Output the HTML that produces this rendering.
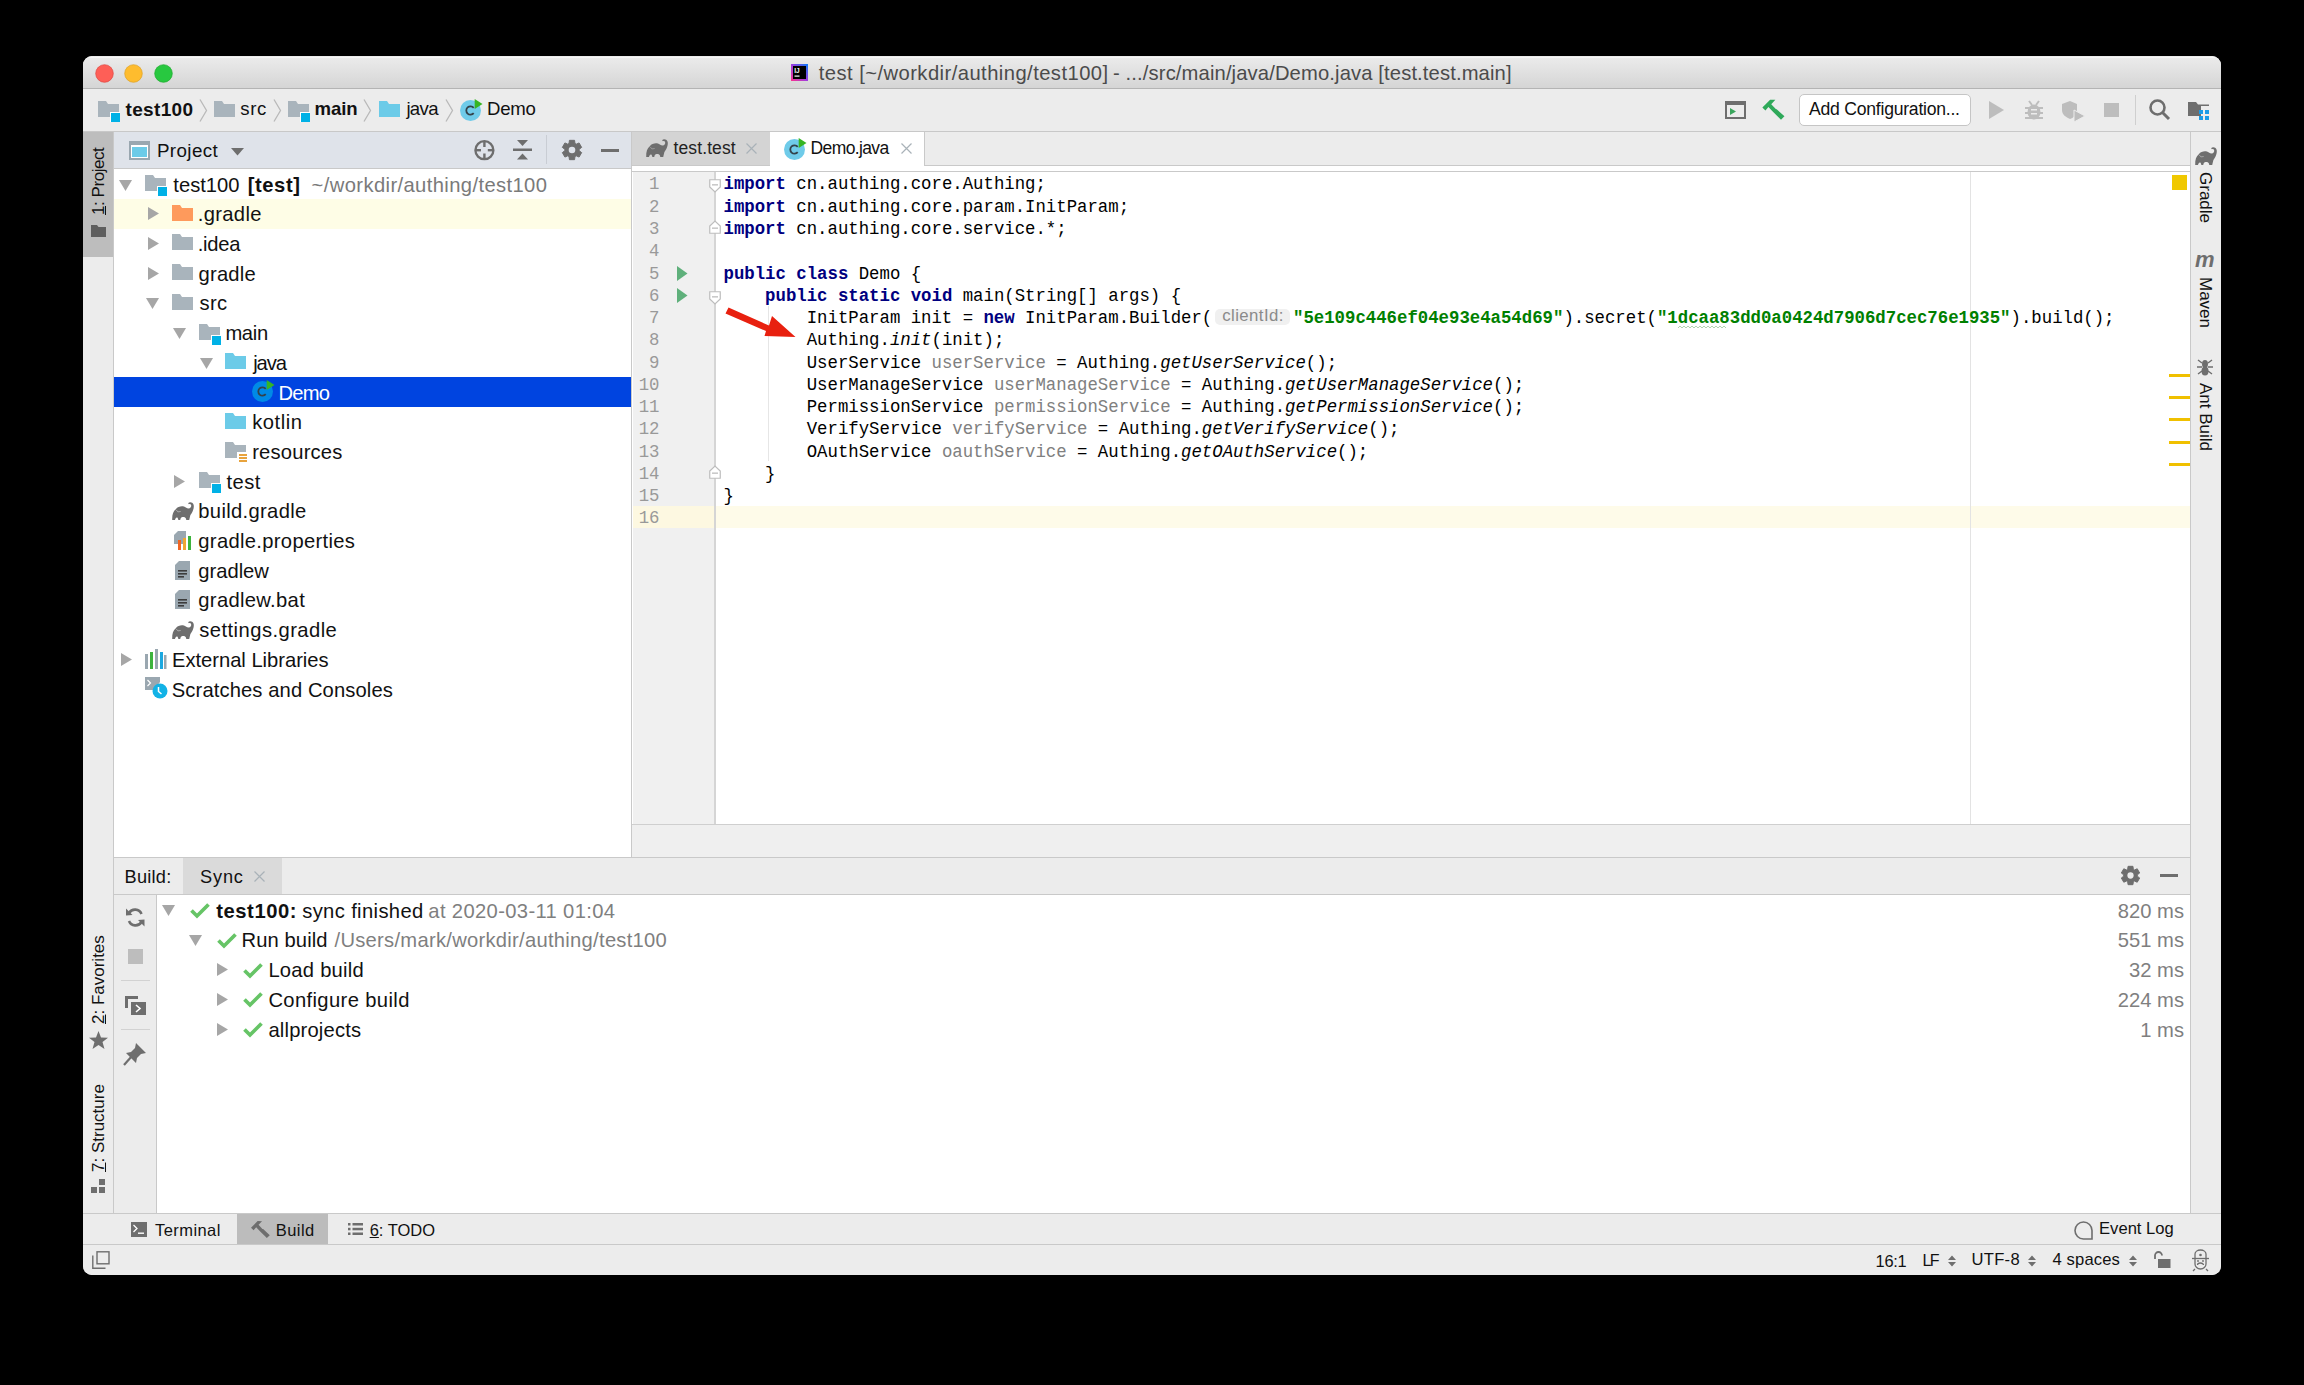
<!DOCTYPE html><html><head><meta charset="utf-8"><style>html,body{margin:0;padding:0;background:#000;width:2304px;height:1385px;overflow:hidden;position:relative}</style></head><body>
<div style="position:absolute;left:83px;top:56px;width:2138px;height:1219px;background:#ececec;border-radius:9px;"></div>
<div style="position:absolute;left:83px;top:56px;width:2138px;height:32px;background:linear-gradient(#ececec,#d5d5d5);border-radius:9px 9px 0 0;"></div>
<div style="position:absolute;left:83px;top:88px;width:2138px;height:1px;background:#b4b4b4;"></div>
<div style="position:absolute;left:89px;top:56.5px;width:2126px;height:1px;background:#f6f6f6;"></div>
<svg style="position:absolute;left:94.5px;top:63.5px;overflow:visible" width="19" height="19" viewBox="0 0 19 19"><circle cx="9.5" cy="9.5" r="8.8" fill="#fe5f57" stroke="#e0443e" stroke-width="0.7"/></svg>
<svg style="position:absolute;left:124.0px;top:63.5px;overflow:visible" width="19" height="19" viewBox="0 0 19 19"><circle cx="9.5" cy="9.5" r="8.8" fill="#febc2e" stroke="#dea123" stroke-width="0.7"/></svg>
<svg style="position:absolute;left:153.5px;top:63.5px;overflow:visible" width="19" height="19" viewBox="0 0 19 19"><circle cx="9.5" cy="9.5" r="8.8" fill="#28c840" stroke="#1aab29" stroke-width="0.7"/></svg>
<svg style="position:absolute;left:791px;top:64px;overflow:visible" width="17" height="17" viewBox="0 0 17 17"><defs><linearGradient id="ijg" x1="0" y1="1" x2="1" y2="0"><stop offset="0" stop-color="#fc318c"/><stop offset="0.5" stop-color="#9c3ee0"/><stop offset="1" stop-color="#087cfa"/></linearGradient></defs><rect width="17" height="17" fill="url(#ijg)"/><rect x="2" y="2" width="13" height="13" fill="#000"/><text x="3.3" y="9" font-family="Liberation Sans" font-weight="bold" font-size="6.5" fill="#fff">IJ</text><rect x="3.5" y="11.5" width="5" height="1.2" fill="#fff"/></svg>
<div style="position:absolute;left:818.80px;top:62.01px;font-family:'Liberation Sans', sans-serif;font-size:20.2px;line-height:1.1172;color:#4b4b4b;font-weight:normal;font-style:normal;white-space:pre;;letter-spacing:0.445px">test [~/workdir/authing/test100]</div>
<div style="position:absolute;left:1113.00px;top:62.01px;font-family:'Liberation Sans', sans-serif;font-size:20.2px;line-height:1.1172;color:#4b4b4b;font-weight:normal;font-style:normal;white-space:pre;;letter-spacing:0.131px">- .../src/main/java/Demo.java [test.test.main]</div>
<div style="position:absolute;left:83px;top:131px;width:2138px;height:1px;background:#c8c8c8;"></div>
<svg style="position:absolute;left:98px;top:101px;overflow:visible" width="24" height="21" viewBox="0 0 24 21"><path d="M0 0 H8 L10 3 H21 V16 H0 Z" fill="#a9b4bc"/><rect x="12" y="11" width="10" height="10" fill="#fff"/><rect x="13" y="12" width="9" height="9" fill="#00b1e6"/></svg>
<div style="position:absolute;left:125.50px;top:98.50px;font-family:'Liberation Sans', sans-serif;font-size:19.0px;line-height:1.1172;color:#111;font-weight:bold;font-style:normal;white-space:pre;;letter-spacing:0.350px">test100</div>
<svg style="position:absolute;left:198.5px;top:99px;overflow:visible" width="9" height="23" viewBox="0 0 9 23"><path d="M1 0.5 L7.5 11.5 L1 22.5" fill="none" stroke="#b9b9b9" stroke-width="1.3"/></svg>
<svg style="position:absolute;left:214px;top:101px;overflow:visible" width="21" height="16" viewBox="0 0 21 16"><path d="M0 0 H8 L10 3 H21 V16 H0 Z" fill="#a9b4bc"/></svg>
<div style="position:absolute;left:240.30px;top:98.86px;font-family:'Liberation Sans', sans-serif;font-size:18.6px;line-height:1.1172;color:#111;font-weight:normal;font-style:normal;white-space:pre;;letter-spacing:0.550px">src</div>
<svg style="position:absolute;left:272.5px;top:99px;overflow:visible" width="9" height="23" viewBox="0 0 9 23"><path d="M1 0.5 L7.5 11.5 L1 22.5" fill="none" stroke="#b9b9b9" stroke-width="1.3"/></svg>
<svg style="position:absolute;left:287.5px;top:101px;overflow:visible" width="24" height="21" viewBox="0 0 24 21"><path d="M0 0 H8 L10 3 H21 V16 H0 Z" fill="#a9b4bc"/><rect x="12" y="11" width="10" height="10" fill="#fff"/><rect x="13" y="12" width="9" height="9" fill="#00b1e6"/></svg>
<div style="position:absolute;left:314.60px;top:98.86px;font-family:'Liberation Sans', sans-serif;font-size:18.6px;line-height:1.1172;color:#111;font-weight:bold;font-style:normal;white-space:pre;;letter-spacing:-0.100px">main</div>
<svg style="position:absolute;left:363px;top:99px;overflow:visible" width="9" height="23" viewBox="0 0 9 23"><path d="M1 0.5 L7.5 11.5 L1 22.5" fill="none" stroke="#b9b9b9" stroke-width="1.3"/></svg>
<svg style="position:absolute;left:378.5px;top:101px;overflow:visible" width="21" height="16" viewBox="0 0 21 16"><path d="M0 0 H8 L10 3 H21 V16 H0 Z" fill="#6ccbe8"/></svg>
<div style="position:absolute;left:406.40px;top:98.86px;font-family:'Liberation Sans', sans-serif;font-size:18.6px;line-height:1.1172;color:#111;font-weight:normal;font-style:normal;white-space:pre;;letter-spacing:-0.667px">java</div>
<svg style="position:absolute;left:445px;top:99px;overflow:visible" width="9" height="23" viewBox="0 0 9 23"><path d="M1 0.5 L7.5 11.5 L1 22.5" fill="none" stroke="#b9b9b9" stroke-width="1.3"/></svg>
<svg style="position:absolute;left:460px;top:97.5px;overflow:visible" width="24" height="23" viewBox="0 0 24 23"><circle cx="10.5" cy="12.5" r="10.5" fill="#6fcbe9"/><path d="M13.72 9.80 A4.2 4.2 0 1 0 13.72 15.20" fill="none" stroke="#34424a" stroke-width="1.8"/><path d="M14.7 1.0 L22.5 6.0 L14.7 11.0 Z" fill="#36b524"/></svg>
<div style="position:absolute;left:487.00px;top:98.86px;font-family:'Liberation Sans', sans-serif;font-size:18.6px;line-height:1.1172;color:#111;font-weight:normal;font-style:normal;white-space:pre;;letter-spacing:-0.233px">Demo</div>
<svg style="position:absolute;left:1725px;top:101px;overflow:visible" width="21" height="18" viewBox="0 0 21 18"><rect x="1" y="1" width="19" height="16" fill="none" stroke="#6e6e6e" stroke-width="2"/><rect x="1" y="1" width="19" height="3" fill="#6e6e6e"/><path d="M5 7 L11 10.5 L5 14 Z" fill="#3aa55c"/></svg>
<svg style="position:absolute;left:1755px;top:94px;overflow:visible" width="35" height="30" viewBox="0 0 35 30"><path d="M7.36 13.43 L15.16 5.63 L20.36 5.85 L16.24 10.18 L20.79 14.94 L21.66 15.16 L29.46 22.3 L26 25.77 L18.19 17.98 L13.43 13 L10.4 16.46 Z" fill="#2fa95a"/></svg>
<div style="position:absolute;left:1798.5px;top:93.5px;width:172px;height:32px;background:#fff;border:1px solid #c5c5c5;border-radius:5px;box-sizing:border-box;"></div>
<div style="position:absolute;left:1809.00px;top:99.97px;font-family:'Liberation Sans', sans-serif;font-size:17.6px;line-height:1.1172;color:#111;font-weight:normal;font-style:normal;white-space:pre;;letter-spacing:-0.237px">Add Configuration...</div>
<svg style="position:absolute;left:1989px;top:101px;overflow:visible" width="15" height="18" viewBox="0 0 15 18"><path d="M0 0 L15 9 L0 18 Z" fill="#bdbdbd"/></svg>
<svg style="position:absolute;left:2025px;top:100px;overflow:visible" width="18" height="20" viewBox="0 0 18 20"><g fill="#bdbdbd"><path d="M4 1 L7 5 M14 1 L11 5" stroke="#bdbdbd" stroke-width="2"/><ellipse cx="9" cy="12" rx="6.5" ry="7.5"/><rect x="0" y="7" width="18" height="2"/><rect x="0" y="12" width="18" height="2"/><rect x="0" y="17" width="18" height="2"/></g><rect x="6" y="9" width="6" height="1.5" fill="#ececec"/><rect x="6" y="13" width="6" height="1.5" fill="#ececec"/></svg>
<svg style="position:absolute;left:2062px;top:101px;overflow:visible" width="23" height="21" viewBox="0 0 23 21"><path d="M0 3 L8 0 L15 3 V9 C15 14 11 17 8 18 C4 16 0 14 0 9 Z" fill="#bdbdbd"/><path d="M12 9 L23 15 L12 21 Z" fill="#bdbdbd" stroke="#ececec" stroke-width="1"/></svg>
<div style="position:absolute;left:2104px;top:102.5px;width:14.5px;height:14.5px;background:#bdbdbd;"></div>
<div style="position:absolute;left:2135px;top:95px;width:1px;height:30px;background:#cfcfcf;"></div>
<svg style="position:absolute;left:2149px;top:99px;overflow:visible" width="22" height="21" viewBox="0 0 22 21"><circle cx="8.5" cy="8.5" r="7" fill="none" stroke="#6e6e6e" stroke-width="2.6"/><path d="M13.5 13.5 L20 20" stroke="#6e6e6e" stroke-width="3"/></svg>
<svg style="position:absolute;left:2188px;top:102px;overflow:visible" width="22" height="19" viewBox="0 0 22 19"><path d="M0 0 H8 L10 2.5 H21 V4 H13 V14 H0 Z" fill="#6e6e6e"/><g fill="#1a9be8"><rect x="11" y="8" width="4" height="4"/><rect x="17" y="8" width="4" height="4"/><rect x="11" y="14" width="4" height="4"/><rect x="17" y="14" width="4" height="4"/></g></svg>
<div style="position:absolute;left:113px;top:132px;width:1px;height:1081px;background:#c9c9c9;"></div>
<div style="position:absolute;left:83px;top:132px;width:30px;height:125px;background:#bdbdbd;"></div>
<div style="position:absolute;left:90px;top:214.5px;transform-origin:0 0;transform:rotate(-90deg);font-family:'Liberation Sans', sans-serif;font-size:17px;line-height:1;color:#111;white-space:pre;letter-spacing:-0.45px"><u>1</u>: Project</div>
<svg style="position:absolute;left:91px;top:225px;overflow:visible" width="15" height="12" viewBox="0 0 15 12"><path d="M0 0 H6 L7.5 2 H15 V12 H0 Z" fill="#5e5e5e"/></svg>
<div style="position:absolute;left:90px;top:1024px;transform-origin:0 0;transform:rotate(-90deg);font-family:'Liberation Sans', sans-serif;font-size:17px;line-height:1;color:#111;white-space:pre;letter-spacing:0px"><u>2</u>: Favorites</div>
<svg style="position:absolute;left:89px;top:1031px;overflow:visible" width="19" height="18" viewBox="0 0 19 18"><path d="M9.5 0 L12 6.5 L19 6.8 L13.5 11 L15.5 18 L9.5 14 L3.5 18 L5.5 11 L0 6.8 L7 6.5 Z" fill="#6e6e6e"/></svg>
<div style="position:absolute;left:90px;top:1171.5px;transform-origin:0 0;transform:rotate(-90deg);font-family:'Liberation Sans', sans-serif;font-size:17px;line-height:1;color:#111;white-space:pre;letter-spacing:0px"><u>7</u>: Structure</div>
<svg style="position:absolute;left:91px;top:1179px;overflow:visible" width="15" height="14" viewBox="0 0 15 14"><g fill="#6e6e6e"><rect x="8" y="0" width="6" height="6"/><rect x="0" y="8" width="6" height="6"/><rect x="8" y="8" width="6" height="6"/></g></svg>
<div style="position:absolute;left:114px;top:132px;width:517px;height:36px;background:#dfe3ea;"></div>
<div style="position:absolute;left:114px;top:168px;width:517px;height:1px;background:#c9c9c9;"></div>
<div style="position:absolute;left:114px;top:169px;width:517px;height:688px;background:#fff;"></div>
<div style="position:absolute;left:631px;top:132px;width:1px;height:725px;background:#c9c9c9;"></div>
<svg style="position:absolute;left:129px;top:141px;overflow:visible" width="21" height="19" viewBox="0 0 21 19"><rect x="0" y="0" width="21" height="19" fill="#9aa7b0"/><rect x="2" y="4" width="17" height="13" fill="#fff"/><rect x="3" y="6" width="15" height="10" fill="#6ccbe8"/></svg>
<div style="position:absolute;left:156.90px;top:139.98px;font-family:'Liberation Sans', sans-serif;font-size:18.8px;line-height:1.1172;color:#111;font-weight:normal;font-style:normal;white-space:pre;;letter-spacing:0.400px">Project</div>
<svg style="position:absolute;left:231px;top:148px;overflow:visible" width="13" height="8" viewBox="0 0 13 8"><path d="M0 0 H13 L6.5 7.5 Z" fill="#6e6e6e"/></svg>
<svg style="position:absolute;left:473.5px;top:140px;overflow:visible" width="21" height="21" viewBox="0 0 21 21"><circle cx="10.4" cy="10.2" r="9" fill="none" stroke="#6e6e6e" stroke-width="2.3"/><g fill="#6e6e6e"><rect x="9.2" y="1.5" width="2.4" height="5.5"/><rect x="9.2" y="13.5" width="2.4" height="5.5"/><rect x="1.5" y="9" width="5.5" height="2.4"/><rect x="13.8" y="9" width="5.5" height="2.4"/></g></svg>
<svg style="position:absolute;left:513px;top:140px;overflow:visible" width="19" height="20" viewBox="0 0 19 20"><g fill="#6e6e6e"><rect x="0" y="8.5" width="19" height="2.5"/><path d="M4 0 H15 L9.5 6 Z"/><path d="M4 19.5 H15 L9.5 13.5 Z"/></g></svg>
<div style="position:absolute;left:546px;top:135px;width:1px;height:29px;background:#c9cdd4;"></div>
<svg style="position:absolute;left:561.5px;top:140px;overflow:visible" width="20" height="20" viewBox="0 0 20 20"><polygon points="7.06,3.43 7.43,0.34 12.57,0.34 12.94,3.43 14.23,4.17 17.08,2.94 19.65,7.39 17.16,9.26 17.16,10.74 19.65,12.61 17.08,17.06 14.23,15.83 12.94,16.57 12.57,19.66 7.43,19.66 7.06,16.57 5.77,15.83 2.92,17.06 0.35,12.61 2.84,10.74 2.84,9.26 0.35,7.39 2.92,2.94 5.77,4.17" fill="#6e6e6e" stroke="#6e6e6e" stroke-width="1" stroke-linejoin="round"/><circle cx="10.0" cy="10.0" r="3.3000000000000003" fill="#dfe3ea"/></svg>
<div style="position:absolute;left:601px;top:148.5px;width:18px;height:3px;background:#6e6e6e;"></div>
<div style="position:absolute;left:114px;top:199.2px;width:517px;height:29.7px;background:#fefde6;"></div>
<div style="position:absolute;left:114px;top:377.4px;width:517px;height:29.7px;background:#0044e0;"></div>
<svg style="position:absolute;left:119px;top:180px;overflow:visible" width="14" height="12" viewBox="0 0 14 12"><path d="M0 0 H13 L6.5 11 Z" fill="#a6a6a6"/></svg>
<svg style="position:absolute;left:145px;top:175px;overflow:visible" width="24" height="21" viewBox="0 0 24 21"><path d="M0 0 H8 L10 3 H21 V16 H0 Z" fill="#a9b4bc"/><rect x="12" y="11" width="10" height="10" fill="#fff"/><rect x="13" y="12" width="9" height="9" fill="#00b1e6"/></svg>
<div style="position:absolute;left:173.30px;top:173.61px;font-family:'Liberation Sans', sans-serif;font-size:20.2px;line-height:1.1172;color:#111;font-weight:normal;font-style:normal;white-space:pre;;letter-spacing:0.000px">test100</div>
<div style="position:absolute;left:247.70px;top:173.61px;font-family:'Liberation Sans', sans-serif;font-size:20.2px;line-height:1.1172;color:#111;font-weight:bold;font-style:normal;white-space:pre;;letter-spacing:0.580px">[test]</div>
<div style="position:absolute;left:311.60px;top:173.61px;font-family:'Liberation Sans', sans-serif;font-size:20.2px;line-height:1.1172;color:#7a7a7a;font-weight:normal;font-style:normal;white-space:pre;;letter-spacing:0.383px">~/workdir/authing/test100</div>
<svg style="position:absolute;left:147.5px;top:207.2px;overflow:visible" width="12" height="14" viewBox="0 0 12 14"><path d="M0 0 V13 L11 6.5 Z" fill="#a6a6a6"/></svg>
<svg style="position:absolute;left:172px;top:205px;overflow:visible" width="21" height="16" viewBox="0 0 21 16"><path d="M0 0 H8 L10 3 H21 V16 H0 Z" fill="#fe9a5c"/></svg>
<div style="position:absolute;left:197.70px;top:203.31px;font-family:'Liberation Sans', sans-serif;font-size:20.2px;line-height:1.1172;color:#111;font-weight:normal;font-style:normal;white-space:pre;;letter-spacing:0.350px">.gradle</div>
<svg style="position:absolute;left:147.5px;top:236.9px;overflow:visible" width="12" height="14" viewBox="0 0 12 14"><path d="M0 0 V13 L11 6.5 Z" fill="#a6a6a6"/></svg>
<svg style="position:absolute;left:172px;top:234.4px;overflow:visible" width="21" height="16" viewBox="0 0 21 16"><path d="M0 0 H8 L10 3 H21 V16 H0 Z" fill="#a9b4bc"/></svg>
<div style="position:absolute;left:197.70px;top:233.01px;font-family:'Liberation Sans', sans-serif;font-size:20.2px;line-height:1.1172;color:#111;font-weight:normal;font-style:normal;white-space:pre;;letter-spacing:-0.225px">.idea</div>
<svg style="position:absolute;left:147.5px;top:266.6px;overflow:visible" width="12" height="14" viewBox="0 0 12 14"><path d="M0 0 V13 L11 6.5 Z" fill="#a6a6a6"/></svg>
<svg style="position:absolute;left:172px;top:264.1px;overflow:visible" width="21" height="16" viewBox="0 0 21 16"><path d="M0 0 H8 L10 3 H21 V16 H0 Z" fill="#a9b4bc"/></svg>
<div style="position:absolute;left:198.50px;top:262.71px;font-family:'Liberation Sans', sans-serif;font-size:20.2px;line-height:1.1172;color:#111;font-weight:normal;font-style:normal;white-space:pre;;letter-spacing:0.220px">gradle</div>
<svg style="position:absolute;left:146px;top:298.3px;overflow:visible" width="14" height="12" viewBox="0 0 14 12"><path d="M0 0 H13 L6.5 11 Z" fill="#a6a6a6"/></svg>
<svg style="position:absolute;left:172px;top:293.8px;overflow:visible" width="21" height="16" viewBox="0 0 21 16"><path d="M0 0 H8 L10 3 H21 V16 H0 Z" fill="#a9b4bc"/></svg>
<div style="position:absolute;left:199.50px;top:292.41px;font-family:'Liberation Sans', sans-serif;font-size:20.2px;line-height:1.1172;color:#111;font-weight:normal;font-style:normal;white-space:pre;;letter-spacing:0.350px">src</div>
<svg style="position:absolute;left:173px;top:328.0px;overflow:visible" width="14" height="12" viewBox="0 0 14 12"><path d="M0 0 H13 L6.5 11 Z" fill="#a6a6a6"/></svg>
<svg style="position:absolute;left:199px;top:323.5px;overflow:visible" width="24" height="21" viewBox="0 0 24 21"><path d="M0 0 H8 L10 3 H21 V16 H0 Z" fill="#a9b4bc"/><rect x="12" y="11" width="10" height="10" fill="#fff"/><rect x="13" y="12" width="9" height="9" fill="#00b1e6"/></svg>
<div style="position:absolute;left:225.40px;top:322.11px;font-family:'Liberation Sans', sans-serif;font-size:20.2px;line-height:1.1172;color:#111;font-weight:normal;font-style:normal;white-space:pre;;letter-spacing:-0.333px">main</div>
<svg style="position:absolute;left:200px;top:357.7px;overflow:visible" width="14" height="12" viewBox="0 0 14 12"><path d="M0 0 H13 L6.5 11 Z" fill="#a6a6a6"/></svg>
<svg style="position:absolute;left:225px;top:353.2px;overflow:visible" width="21" height="16" viewBox="0 0 21 16"><path d="M0 0 H8 L10 3 H21 V16 H0 Z" fill="#6ccbe8"/></svg>
<div style="position:absolute;left:253.20px;top:351.81px;font-family:'Liberation Sans', sans-serif;font-size:20.2px;line-height:1.1172;color:#111;font-weight:normal;font-style:normal;white-space:pre;;letter-spacing:-1.100px">java</div>
<svg style="position:absolute;left:252px;top:378.9px;overflow:visible" width="24" height="23" viewBox="0 0 24 23"><circle cx="10.5" cy="12.5" r="10.5" fill="#008ae6"/><path d="M13.72 9.80 A4.2 4.2 0 1 0 13.72 15.20" fill="none" stroke="#34424a" stroke-width="1.8"/><path d="M14.7 1.0 L22.5 6.0 L14.7 11.0 Z" fill="#36b524"/></svg>
<div style="position:absolute;left:278.50px;top:381.51px;font-family:'Liberation Sans', sans-serif;font-size:20.2px;line-height:1.1172;color:#fff;font-weight:normal;font-style:normal;white-space:pre;;letter-spacing:-0.800px">Demo</div>
<svg style="position:absolute;left:225px;top:412.6px;overflow:visible" width="21" height="16" viewBox="0 0 21 16"><path d="M0 0 H8 L10 3 H21 V16 H0 Z" fill="#6ccbe8"/></svg>
<div style="position:absolute;left:252.20px;top:411.21px;font-family:'Liberation Sans', sans-serif;font-size:20.2px;line-height:1.1172;color:#111;font-weight:normal;font-style:normal;white-space:pre;;letter-spacing:0.520px">kotlin</div>
<svg style="position:absolute;left:225px;top:442.3px;overflow:visible" width="24" height="22" viewBox="0 0 24 22"><path d="M0 0 H8 L10 3 H21 V16 H0 Z" fill="#a9b4bc"/><rect x="12" y="10" width="11" height="12" fill="#fff"/><g fill="#e8a33d"><rect x="14" y="12" width="8" height="2"/><rect x="14" y="15" width="8" height="2"/><rect x="14" y="18" width="8" height="2"/></g></svg>
<div style="position:absolute;left:252.20px;top:440.91px;font-family:'Liberation Sans', sans-serif;font-size:20.2px;line-height:1.1172;color:#111;font-weight:normal;font-style:normal;white-space:pre;;letter-spacing:0.188px">resources</div>
<svg style="position:absolute;left:174px;top:474.5px;overflow:visible" width="12" height="14" viewBox="0 0 12 14"><path d="M0 0 V13 L11 6.5 Z" fill="#a6a6a6"/></svg>
<svg style="position:absolute;left:199px;top:472.0px;overflow:visible" width="24" height="21" viewBox="0 0 24 21"><path d="M0 0 H8 L10 3 H21 V16 H0 Z" fill="#a9b4bc"/><rect x="12" y="11" width="10" height="10" fill="#fff"/><rect x="13" y="12" width="9" height="9" fill="#00b1e6"/></svg>
<div style="position:absolute;left:226.40px;top:470.61px;font-family:'Liberation Sans', sans-serif;font-size:20.2px;line-height:1.1172;color:#111;font-weight:normal;font-style:normal;white-space:pre;;letter-spacing:0.467px">test</div>
<svg style="position:absolute;left:172px;top:502.2px;overflow:visible" width="22" height="18" viewBox="0 0 22 18"><g transform="scale(1.0)"><path d="M0.2 17.9 C0 12.5 1.3 9 3.8 7.2 C5.5 4.8 8.5 4 11 4.3 C13.2 4.6 14.6 6.6 16.6 6.6 C18.6 6.5 19.6 4.6 19.1 3 C18.7 1.9 17.6 1.6 16.9 2.3 L16.1 1.3 C17.4 -0.3 20.6 0 21.6 2.8 C22.4 5.6 20.8 10 18.4 13 L17.2 17.9 H14.3 L13.8 16.3 C12.8 14.5 9.6 14.5 8.7 16.3 L8.2 17.9 H6.4 L5.7 16 C5.1 15.3 4.2 15.5 3.7 16.3 L2.9 17.9 Z" fill="#6e6e6e"/><path d="M4.3 8 L5.9 9.9 L8.7 9.5" fill="none" stroke="#fff" stroke-width="0.6" opacity="0.7"/></g></svg>
<div style="position:absolute;left:198.30px;top:500.31px;font-family:'Liberation Sans', sans-serif;font-size:20.2px;line-height:1.1172;color:#111;font-weight:normal;font-style:normal;white-space:pre;;letter-spacing:0.327px">build.gradle</div>
<svg style="position:absolute;left:174px;top:530.9px;overflow:visible" width="21" height="21" viewBox="0 0 21 21"><path d="M0 4 L4 0 H12 V13 H0 Z" fill="#9aa7b0"/><rect x="4" y="9" width="3" height="10" fill="#f26522"/><rect x="9" y="7" width="3" height="12" fill="#f0a732"/><rect x="14" y="5" width="3" height="14" fill="#3db33d"/></svg>
<div style="position:absolute;left:198.30px;top:530.01px;font-family:'Liberation Sans', sans-serif;font-size:20.2px;line-height:1.1172;color:#111;font-weight:normal;font-style:normal;white-space:pre;;letter-spacing:0.319px">gradle.properties</div>
<svg style="position:absolute;left:175px;top:560.5999999999999px;overflow:visible" width="16" height="20" viewBox="0 0 16 20"><path d="M0 4 L4 0 H15 V19 H0 Z" fill="#9aa7b0"/><g fill="#3c3c3c"><rect x="3" y="9" width="9" height="1.6"/><rect x="3" y="12" width="9" height="1.6"/><rect x="3" y="15" width="6" height="1.6"/></g></svg>
<div style="position:absolute;left:198.30px;top:559.71px;font-family:'Liberation Sans', sans-serif;font-size:20.2px;line-height:1.1172;color:#111;font-weight:normal;font-style:normal;white-space:pre;;letter-spacing:-0.017px">gradlew</div>
<svg style="position:absolute;left:175px;top:590.3px;overflow:visible" width="16" height="20" viewBox="0 0 16 20"><path d="M0 4 L4 0 H15 V19 H0 Z" fill="#9aa7b0"/><g fill="#3c3c3c"><rect x="3" y="9" width="9" height="1.6"/><rect x="3" y="12" width="9" height="1.6"/><rect x="3" y="15" width="6" height="1.6"/></g></svg>
<div style="position:absolute;left:198.30px;top:589.41px;font-family:'Liberation Sans', sans-serif;font-size:20.2px;line-height:1.1172;color:#111;font-weight:normal;font-style:normal;white-space:pre;;letter-spacing:0.320px">gradlew.bat</div>
<svg style="position:absolute;left:172px;top:621.0px;overflow:visible" width="22" height="18" viewBox="0 0 22 18"><g transform="scale(1.0)"><path d="M0.2 17.9 C0 12.5 1.3 9 3.8 7.2 C5.5 4.8 8.5 4 11 4.3 C13.2 4.6 14.6 6.6 16.6 6.6 C18.6 6.5 19.6 4.6 19.1 3 C18.7 1.9 17.6 1.6 16.9 2.3 L16.1 1.3 C17.4 -0.3 20.6 0 21.6 2.8 C22.4 5.6 20.8 10 18.4 13 L17.2 17.9 H14.3 L13.8 16.3 C12.8 14.5 9.6 14.5 8.7 16.3 L8.2 17.9 H6.4 L5.7 16 C5.1 15.3 4.2 15.5 3.7 16.3 L2.9 17.9 Z" fill="#6e6e6e"/><path d="M4.3 8 L5.9 9.9 L8.7 9.5" fill="none" stroke="#fff" stroke-width="0.6" opacity="0.7"/></g></svg>
<div style="position:absolute;left:199.30px;top:619.11px;font-family:'Liberation Sans', sans-serif;font-size:20.2px;line-height:1.1172;color:#111;font-weight:normal;font-style:normal;white-space:pre;;letter-spacing:0.443px">settings.gradle</div>
<svg style="position:absolute;left:121px;top:652.7px;overflow:visible" width="12" height="14" viewBox="0 0 12 14"><path d="M0 0 V13 L11 6.5 Z" fill="#a6a6a6"/></svg>
<svg style="position:absolute;left:145px;top:648.7px;overflow:visible" width="21" height="20" viewBox="0 0 21 20"><g><rect x="0" y="5" width="3" height="15" fill="#9aa7b0"/><rect x="5" y="3" width="3" height="17" fill="#3db33d"/><rect x="10" y="0" width="3" height="20" fill="#9aa7b0"/><rect x="15" y="3" width="3" height="17" fill="#1ba8e0"/><rect x="19" y="6" width="2.5" height="14" fill="#9aa7b0"/></g></svg>
<div style="position:absolute;left:172.00px;top:648.81px;font-family:'Liberation Sans', sans-serif;font-size:20.2px;line-height:1.1172;color:#111;font-weight:normal;font-style:normal;white-space:pre;;letter-spacing:-0.029px">External Libraries</div>
<svg style="position:absolute;left:145px;top:677.4px;overflow:visible" width="22" height="24" viewBox="0 0 22 24"><path d="M0 0 H15 V5 L9 13 H0 Z" fill="#9aa7b0"/><path d="M2.5 3 L5.5 6 L2.5 9" fill="none" stroke="#fff" stroke-width="1.2"/><circle cx="15" cy="14" r="7.5" fill="#12b2e6"/><path d="M13.5 10 V14.5 L16.5 17" fill="none" stroke="#fff" stroke-width="1.5"/></svg>
<div style="position:absolute;left:171.80px;top:678.51px;font-family:'Liberation Sans', sans-serif;font-size:20.2px;line-height:1.1172;color:#111;font-weight:normal;font-style:normal;white-space:pre;;letter-spacing:0.105px">Scratches and Consoles</div>
<div style="position:absolute;left:632px;top:132px;width:1558px;height:33px;background:#ececec;"></div>
<div style="position:absolute;left:632px;top:132px;width:138px;height:33px;background:#d4d4d4;"></div>
<div style="position:absolute;left:770px;top:132px;width:154px;height:39px;background:#fff;"></div>
<div style="position:absolute;left:924px;top:132px;width:1px;height:33px;background:#c9c9c9;"></div>
<div style="position:absolute;left:924px;top:165px;width:1266px;height:1px;background:#c9c9c9;"></div>
<div style="position:absolute;left:632px;top:165px;width:138px;height:1px;background:#c9c9c9;"></div>
<div style="position:absolute;left:632px;top:166px;width:1558px;height:5px;background:#fff;"></div>
<div style="position:absolute;left:632px;top:166px;width:138px;height:5px;background:#fff;"></div>
<div style="position:absolute;left:632px;top:171px;width:1558px;height:1px;background:#c9c9c9;"></div>
<svg style="position:absolute;left:645.8px;top:139.2px;overflow:visible" width="22" height="18" viewBox="0 0 22 18"><g transform="scale(1.0)"><path d="M0.2 17.9 C0 12.5 1.3 9 3.8 7.2 C5.5 4.8 8.5 4 11 4.3 C13.2 4.6 14.6 6.6 16.6 6.6 C18.6 6.5 19.6 4.6 19.1 3 C18.7 1.9 17.6 1.6 16.9 2.3 L16.1 1.3 C17.4 -0.3 20.6 0 21.6 2.8 C22.4 5.6 20.8 10 18.4 13 L17.2 17.9 H14.3 L13.8 16.3 C12.8 14.5 9.6 14.5 8.7 16.3 L8.2 17.9 H6.4 L5.7 16 C5.1 15.3 4.2 15.5 3.7 16.3 L2.9 17.9 Z" fill="#6e6e6e"/><path d="M4.3 8 L5.9 9.9 L8.7 9.5" fill="none" stroke="#d4d4d4" stroke-width="0.6" opacity="0.7"/></g></svg>
<div style="position:absolute;left:673.50px;top:138.56px;font-family:'Liberation Sans', sans-serif;font-size:17.5px;line-height:1.1172;color:#222;font-weight:normal;font-style:normal;white-space:pre;;letter-spacing:0.112px">test.test</div>
<svg style="position:absolute;left:745.5px;top:142.5px;overflow:visible" width="11" height="11" viewBox="0 0 11 11"><path d="M0.5 0.5 L10.5 10.5 M10.5 0.5 L0.5 10.5" stroke="#a9b2b8" stroke-width="1.2"/></svg>
<svg style="position:absolute;left:784px;top:137px;overflow:visible" width="24" height="23" viewBox="0 0 24 23"><circle cx="10.5" cy="12.5" r="10.5" fill="#6fcbe9"/><path d="M13.72 9.80 A4.2 4.2 0 1 0 13.72 15.20" fill="none" stroke="#34424a" stroke-width="1.8"/><path d="M14.7 1.0 L22.5 6.0 L14.7 11.0 Z" fill="#36b524"/></svg>
<div style="position:absolute;left:810.60px;top:138.56px;font-family:'Liberation Sans', sans-serif;font-size:17.5px;line-height:1.1172;color:#111;font-weight:normal;font-style:normal;white-space:pre;;letter-spacing:-0.638px">Demo.java</div>
<svg style="position:absolute;left:900.5px;top:142.5px;overflow:visible" width="11" height="11" viewBox="0 0 11 11"><path d="M0.5 0.5 L10.5 10.5 M10.5 0.5 L0.5 10.5" stroke="#a9b2b8" stroke-width="1.2"/></svg>
<div style="position:absolute;left:632px;top:172px;width:1558px;height:652px;background:#fff;"></div>
<div style="position:absolute;left:633px;top:172px;width:82px;height:652px;background:#f0f0f0;"></div>
<div style="position:absolute;left:633px;top:505.905px;width:82px;height:22.267px;background:#fdf8e1;"></div>
<div style="position:absolute;left:715px;top:505.905px;width:1475px;height:22.267px;background:#fefbe9;"></div>
<div style="position:absolute;left:714px;top:172px;width:1.5px;height:652px;background:#d5d5d5;"></div>
<div style="position:absolute;left:1970px;top:172px;width:1px;height:652px;background:#e3e3e3;"></div>
<div style="position:absolute;left:632px;top:824px;width:1558px;height:1px;background:#cfcfcf;"></div>
<div style="position:absolute;left:632px;top:825px;width:1558px;height:32px;background:#efefef;"></div>
<div style="position:absolute;left:649.10px;top:175.46px;font-family:'Liberation Mono', monospace;font-size:17.34px;line-height:1.1328;color:#999999;font-weight:normal;font-style:normal;white-space:pre;transform:scaleY(1.08);transform-origin:0 14.4px;;letter-spacing:0.000px">1</div>
<div style="position:absolute;left:649.10px;top:197.73px;font-family:'Liberation Mono', monospace;font-size:17.34px;line-height:1.1328;color:#999999;font-weight:normal;font-style:normal;white-space:pre;transform:scaleY(1.08);transform-origin:0 14.4px;;letter-spacing:0.000px">2</div>
<div style="position:absolute;left:649.10px;top:220.00px;font-family:'Liberation Mono', monospace;font-size:17.34px;line-height:1.1328;color:#999999;font-weight:normal;font-style:normal;white-space:pre;transform:scaleY(1.08);transform-origin:0 14.4px;;letter-spacing:0.000px">3</div>
<div style="position:absolute;left:649.10px;top:242.27px;font-family:'Liberation Mono', monospace;font-size:17.34px;line-height:1.1328;color:#999999;font-weight:normal;font-style:normal;white-space:pre;transform:scaleY(1.08);transform-origin:0 14.4px;;letter-spacing:0.000px">4</div>
<div style="position:absolute;left:649.10px;top:264.53px;font-family:'Liberation Mono', monospace;font-size:17.34px;line-height:1.1328;color:#999999;font-weight:normal;font-style:normal;white-space:pre;transform:scaleY(1.08);transform-origin:0 14.4px;;letter-spacing:0.000px">5</div>
<div style="position:absolute;left:649.10px;top:286.80px;font-family:'Liberation Mono', monospace;font-size:17.34px;line-height:1.1328;color:#999999;font-weight:normal;font-style:normal;white-space:pre;transform:scaleY(1.08);transform-origin:0 14.4px;;letter-spacing:0.000px">6</div>
<div style="position:absolute;left:649.10px;top:309.07px;font-family:'Liberation Mono', monospace;font-size:17.34px;line-height:1.1328;color:#999999;font-weight:normal;font-style:normal;white-space:pre;transform:scaleY(1.08);transform-origin:0 14.4px;;letter-spacing:0.000px">7</div>
<div style="position:absolute;left:649.10px;top:331.33px;font-family:'Liberation Mono', monospace;font-size:17.34px;line-height:1.1328;color:#999999;font-weight:normal;font-style:normal;white-space:pre;transform:scaleY(1.08);transform-origin:0 14.4px;;letter-spacing:0.000px">8</div>
<div style="position:absolute;left:649.10px;top:353.60px;font-family:'Liberation Mono', monospace;font-size:17.34px;line-height:1.1328;color:#999999;font-weight:normal;font-style:normal;white-space:pre;transform:scaleY(1.08);transform-origin:0 14.4px;;letter-spacing:0.000px">9</div>
<div style="position:absolute;left:638.69px;top:375.87px;font-family:'Liberation Mono', monospace;font-size:17.34px;line-height:1.1328;color:#999999;font-weight:normal;font-style:normal;white-space:pre;transform:scaleY(1.08);transform-origin:0 14.4px;;letter-spacing:0.000px">10</div>
<div style="position:absolute;left:638.69px;top:398.13px;font-family:'Liberation Mono', monospace;font-size:17.34px;line-height:1.1328;color:#999999;font-weight:normal;font-style:normal;white-space:pre;transform:scaleY(1.08);transform-origin:0 14.4px;;letter-spacing:0.000px">11</div>
<div style="position:absolute;left:638.69px;top:420.40px;font-family:'Liberation Mono', monospace;font-size:17.34px;line-height:1.1328;color:#999999;font-weight:normal;font-style:normal;white-space:pre;transform:scaleY(1.08);transform-origin:0 14.4px;;letter-spacing:0.000px">12</div>
<div style="position:absolute;left:638.69px;top:442.67px;font-family:'Liberation Mono', monospace;font-size:17.34px;line-height:1.1328;color:#999999;font-weight:normal;font-style:normal;white-space:pre;transform:scaleY(1.08);transform-origin:0 14.4px;;letter-spacing:0.000px">13</div>
<div style="position:absolute;left:638.69px;top:464.94px;font-family:'Liberation Mono', monospace;font-size:17.34px;line-height:1.1328;color:#999999;font-weight:normal;font-style:normal;white-space:pre;transform:scaleY(1.08);transform-origin:0 14.4px;;letter-spacing:0.000px">14</div>
<div style="position:absolute;left:638.69px;top:487.20px;font-family:'Liberation Mono', monospace;font-size:17.34px;line-height:1.1328;color:#999999;font-weight:normal;font-style:normal;white-space:pre;transform:scaleY(1.08);transform-origin:0 14.4px;;letter-spacing:0.000px">15</div>
<div style="position:absolute;left:638.69px;top:509.47px;font-family:'Liberation Mono', monospace;font-size:17.34px;line-height:1.1328;color:#999999;font-weight:normal;font-style:normal;white-space:pre;transform:scaleY(1.08);transform-origin:0 14.4px;;letter-spacing:0.000px">16</div>
<svg style="position:absolute;left:677px;top:265.968px;overflow:visible" width="11" height="15" viewBox="0 0 11 15"><path d="M0 0 L10.5 7.5 L0 15 Z" fill="#5fb07b"/></svg>
<svg style="position:absolute;left:677px;top:288.235px;overflow:visible" width="11" height="15" viewBox="0 0 11 15"><path d="M0 0 L10.5 7.5 L0 15 Z" fill="#5fb07b"/></svg>
<svg style="position:absolute;left:709px;top:179.4px;overflow:visible" width="12" height="14" viewBox="0 0 12 14"><path d="M0.75 0.75 H11.25 V8 L6 13 L0.75 8 Z" fill="#fff" stroke="#bdbdbd" stroke-width="1.2"/><rect x="3" y="5.2" width="6" height="1.3" fill="#bdbdbd"/></svg>
<svg style="position:absolute;left:709px;top:220.434px;overflow:visible" width="12" height="14" viewBox="0 0 12 14"><path d="M0.75 13.25 H11.25 V6 L6 1 L0.75 6 Z" fill="#fff" stroke="#bdbdbd" stroke-width="1.2"/><rect x="3" y="7.5" width="6" height="1.3" fill="#bdbdbd"/></svg>
<svg style="position:absolute;left:709px;top:290.735px;overflow:visible" width="12" height="14" viewBox="0 0 12 14"><path d="M0.75 0.75 H11.25 V8 L6 13 L0.75 8 Z" fill="#fff" stroke="#bdbdbd" stroke-width="1.2"/><rect x="3" y="5.2" width="6" height="1.3" fill="#bdbdbd"/></svg>
<svg style="position:absolute;left:709px;top:465.371px;overflow:visible" width="12" height="14" viewBox="0 0 12 14"><path d="M0.75 13.25 H11.25 V6 L6 1 L0.75 6 Z" fill="#fff" stroke="#bdbdbd" stroke-width="1.2"/><rect x="3" y="7.5" width="6" height="1.3" fill="#bdbdbd"/></svg>
<div style="position:absolute;left:768px;top:305.502px;width:1px;height:155.86899999999997px;background:#e6e6e6;"></div>
<div style="position:absolute;left:723.50px;top:175.46px;font-family:'Liberation Mono', monospace;font-size:17.34px;line-height:1.1328;color:#000;font-weight:normal;font-style:normal;white-space:pre;transform:scaleY(1.11);transform-origin:0 14.4px;;letter-spacing:0.000px"><span style="color:#000080;font-weight:bold">import</span> cn.authing.core.Authing;</div>
<div style="position:absolute;left:723.50px;top:197.73px;font-family:'Liberation Mono', monospace;font-size:17.34px;line-height:1.1328;color:#000;font-weight:normal;font-style:normal;white-space:pre;transform:scaleY(1.11);transform-origin:0 14.4px;;letter-spacing:0.000px"><span style="color:#000080;font-weight:bold">import</span> cn.authing.core.param.InitParam;</div>
<div style="position:absolute;left:723.50px;top:220.00px;font-family:'Liberation Mono', monospace;font-size:17.34px;line-height:1.1328;color:#000;font-weight:normal;font-style:normal;white-space:pre;transform:scaleY(1.11);transform-origin:0 14.4px;;letter-spacing:0.000px"><span style="color:#000080;font-weight:bold">import</span> cn.authing.core.service.*;</div>
<div style="position:absolute;left:723.50px;top:264.53px;font-family:'Liberation Mono', monospace;font-size:17.34px;line-height:1.1328;color:#000;font-weight:normal;font-style:normal;white-space:pre;transform:scaleY(1.11);transform-origin:0 14.4px;;letter-spacing:0.000px"><span style="color:#000080;font-weight:bold">public class</span> Demo {</div>
<div style="position:absolute;left:723.50px;top:286.80px;font-family:'Liberation Mono', monospace;font-size:17.34px;line-height:1.1328;color:#000;font-weight:normal;font-style:normal;white-space:pre;transform:scaleY(1.11);transform-origin:0 14.4px;;letter-spacing:0.000px">    <span style="color:#000080;font-weight:bold">public static void</span> main(String[] args) {</div>
<div style="position:absolute;left:723.50px;top:309.07px;font-family:'Liberation Mono', monospace;font-size:17.34px;line-height:1.1328;color:#000;font-weight:normal;font-style:normal;white-space:pre;transform:scaleY(1.11);transform-origin:0 14.4px;;letter-spacing:0.000px">        InitParam init = <span style="color:#000080;font-weight:bold">new</span> InitParam.Builder(</div>
<div style="position:absolute;left:723.50px;top:331.33px;font-family:'Liberation Mono', monospace;font-size:17.34px;line-height:1.1328;color:#000;font-weight:normal;font-style:normal;white-space:pre;transform:scaleY(1.11);transform-origin:0 14.4px;;letter-spacing:0.000px">        Authing.<span style="font-style:italic">init</span>(init);</div>
<div style="position:absolute;left:723.50px;top:353.60px;font-family:'Liberation Mono', monospace;font-size:17.34px;line-height:1.1328;color:#000;font-weight:normal;font-style:normal;white-space:pre;transform:scaleY(1.11);transform-origin:0 14.4px;;letter-spacing:0.000px">        UserService <span style="color:#808080">userService</span> = Authing.<span style="font-style:italic">getUserService</span>();</div>
<div style="position:absolute;left:723.50px;top:375.87px;font-family:'Liberation Mono', monospace;font-size:17.34px;line-height:1.1328;color:#000;font-weight:normal;font-style:normal;white-space:pre;transform:scaleY(1.11);transform-origin:0 14.4px;;letter-spacing:0.000px">        UserManageService <span style="color:#808080">userManageService</span> = Authing.<span style="font-style:italic">getUserManageService</span>();</div>
<div style="position:absolute;left:723.50px;top:398.13px;font-family:'Liberation Mono', monospace;font-size:17.34px;line-height:1.1328;color:#000;font-weight:normal;font-style:normal;white-space:pre;transform:scaleY(1.11);transform-origin:0 14.4px;;letter-spacing:0.000px">        PermissionService <span style="color:#808080">permissionService</span> = Authing.<span style="font-style:italic">getPermissionService</span>();</div>
<div style="position:absolute;left:723.50px;top:420.40px;font-family:'Liberation Mono', monospace;font-size:17.34px;line-height:1.1328;color:#000;font-weight:normal;font-style:normal;white-space:pre;transform:scaleY(1.11);transform-origin:0 14.4px;;letter-spacing:0.000px">        VerifyService <span style="color:#808080">verifyService</span> = Authing.<span style="font-style:italic">getVerifyService</span>();</div>
<div style="position:absolute;left:723.50px;top:442.67px;font-family:'Liberation Mono', monospace;font-size:17.34px;line-height:1.1328;color:#000;font-weight:normal;font-style:normal;white-space:pre;transform:scaleY(1.11);transform-origin:0 14.4px;;letter-spacing:0.000px">        OAuthService <span style="color:#808080">oauthService</span> = Authing.<span style="font-style:italic">getOAuthService</span>();</div>
<div style="position:absolute;left:723.50px;top:464.94px;font-family:'Liberation Mono', monospace;font-size:17.34px;line-height:1.1328;color:#000;font-weight:normal;font-style:normal;white-space:pre;transform:scaleY(1.11);transform-origin:0 14.4px;;letter-spacing:0.000px">    }</div>
<div style="position:absolute;left:723.50px;top:487.20px;font-family:'Liberation Mono', monospace;font-size:17.34px;line-height:1.1328;color:#000;font-weight:normal;font-style:normal;white-space:pre;transform:scaleY(1.11);transform-origin:0 14.4px;;letter-spacing:0.000px">}</div>
<div style="position:absolute;left:1293.00px;top:309.07px;font-family:'Liberation Mono', monospace;font-size:17.34px;line-height:1.1328;color:#000;font-weight:normal;font-style:normal;white-space:pre;transform:scaleY(1.11);transform-origin:0 14.4px;;letter-spacing:0.000px"><span style="color:#008000;font-weight:bold">&quot;5e109c446ef04e93e4a54d69&quot;</span>).secret(<span style="color:#008000;font-weight:bold">&quot;1dcaa83dd0a0424d7906d7cec76e1935&quot;</span>).build();</div>
<div style="position:absolute;left:1214.5px;top:308.5px;width:75px;height:16.5px;background:#f0f0f0;border-radius:5px;"></div>
<div style="position:absolute;left:1222.20px;top:306.69px;font-family:'Liberation Sans', sans-serif;font-size:16.8px;line-height:1.1172;color:#8a8a8a;font-weight:normal;font-style:normal;white-space:pre;;letter-spacing:0.425px">clientId:</div>
<svg style="position:absolute;left:1678px;top:326px;overflow:visible" width="41" height="3" viewBox="0 0 41 3"><path d="M0 2 L2 0 L4 2 L6 0 L8 2 L10 0 L12 2 L14 0 L16 2 L18 0 L20 2 L22 0 L24 2 L26 0 L28 2 L30 0 L32 2 L34 0 L36 2 L38 0 L40 2 L42 0 L44 2 L46 0 L48 2" fill="none" stroke="#9fc79f" stroke-width="0.8"/></svg>
<svg style="position:absolute;left:720px;top:305px;overflow:visible" width="80" height="40" viewBox="0 0 80 40"><path d="M5.5 8.5 L46 26 L44.5 31 L75.5 32 L52 11 L49 20.5 L8.5 2.5 Z" fill="#e8200f"/></svg>
<div style="position:absolute;left:2172px;top:175px;width:15px;height:15px;background:#f0c800;"></div>
<div style="position:absolute;left:2169px;top:374.1px;width:21px;height:3px;background:#f0c000;"></div>
<div style="position:absolute;left:2169px;top:396.3px;width:21px;height:3px;background:#f0c000;"></div>
<div style="position:absolute;left:2169px;top:418.2px;width:21px;height:3px;background:#f0c000;"></div>
<div style="position:absolute;left:2169px;top:440.6px;width:21px;height:3px;background:#f0c000;"></div>
<div style="position:absolute;left:2169px;top:462.5px;width:21px;height:3px;background:#f0c000;"></div>
<div style="position:absolute;left:2190px;top:132px;width:1px;height:1081px;background:#c9c9c9;"></div>
<svg style="position:absolute;left:2195px;top:147px;overflow:visible" width="22" height="18" viewBox="0 0 22 18"><g transform="scale(1.0)"><path d="M0.2 17.9 C0 12.5 1.3 9 3.8 7.2 C5.5 4.8 8.5 4 11 4.3 C13.2 4.6 14.6 6.6 16.6 6.6 C18.6 6.5 19.6 4.6 19.1 3 C18.7 1.9 17.6 1.6 16.9 2.3 L16.1 1.3 C17.4 -0.3 20.6 0 21.6 2.8 C22.4 5.6 20.8 10 18.4 13 L17.2 17.9 H14.3 L13.8 16.3 C12.8 14.5 9.6 14.5 8.7 16.3 L8.2 17.9 H6.4 L5.7 16 C5.1 15.3 4.2 15.5 3.7 16.3 L2.9 17.9 Z" fill="#6e6e6e"/><path d="M4.3 8 L5.9 9.9 L8.7 9.5" fill="none" stroke="#ececec" stroke-width="0.6" opacity="0.7"/></g></svg>
<div style="position:absolute;left:2214px;top:172px;transform-origin:0 0;transform:rotate(90deg);font-family:'Liberation Sans', sans-serif;font-size:17px;line-height:1;color:#111;white-space:pre;">Gradle</div>
<div style="position:absolute;left:2195.00px;top:248.08px;font-family:'Liberation Sans', sans-serif;font-size:22px;line-height:1.1172;color:#6e6e6e;font-weight:normal;font-style:normal;white-space:pre;;letter-spacing:0.000px"><b><i>m</i></b></div>
<div style="position:absolute;left:2214px;top:277px;transform-origin:0 0;transform:rotate(90deg);font-family:'Liberation Sans', sans-serif;font-size:17px;line-height:1;color:#111;white-space:pre;">Maven</div>
<svg style="position:absolute;left:2197px;top:358px;overflow:visible" width="16" height="18" viewBox="0 0 16 18"><g fill="#6e6e6e"><ellipse cx="8" cy="6" rx="3" ry="4"/><ellipse cx="8" cy="13" rx="3.5" ry="4.5"/></g><path d="M1 2 L5 5 M15 2 L11 5 M0 9 L5 9 M16 9 L11 9 M1 16 L5 13 M15 16 L11 13" stroke="#6e6e6e" stroke-width="1.4"/></svg>
<div style="position:absolute;left:2214px;top:383px;transform-origin:0 0;transform:rotate(90deg);font-family:'Liberation Sans', sans-serif;font-size:17px;line-height:1;color:#111;white-space:pre;">Ant Build</div>
<div style="position:absolute;left:114px;top:857px;width:2076px;height:1px;background:#c9c9c9;"></div>
<div style="position:absolute;left:114px;top:858px;width:2076px;height:36px;background:#ececec;"></div>
<div style="position:absolute;left:183px;top:858px;width:99px;height:36px;background:#dadada;"></div>
<div style="position:absolute;left:114px;top:894px;width:2076px;height:1px;background:#c9c9c9;"></div>
<div style="position:absolute;left:124.60px;top:866.52px;font-family:'Liberation Sans', sans-serif;font-size:18.2px;line-height:1.1172;color:#111;font-weight:normal;font-style:normal;white-space:pre;;letter-spacing:0.220px">Build:</div>
<div style="position:absolute;left:200.00px;top:866.52px;font-family:'Liberation Sans', sans-serif;font-size:18.2px;line-height:1.1172;color:#111;font-weight:normal;font-style:normal;white-space:pre;;letter-spacing:0.833px">Sync</div>
<svg style="position:absolute;left:254px;top:871px;overflow:visible" width="11" height="11" viewBox="0 0 11 11"><path d="M0.5 0.5 L10.5 10.5 M10.5 0.5 L0.5 10.5" stroke="#a9b2b8" stroke-width="1.2"/></svg>
<svg style="position:absolute;left:2121px;top:866px;overflow:visible" width="19" height="19" viewBox="0 0 19 19"><polygon points="6.71,3.25 7.06,0.32 11.94,0.32 12.29,3.25 13.51,3.96 16.23,2.79 18.67,7.02 16.30,8.79 16.30,10.21 18.67,11.98 16.23,16.21 13.51,15.04 12.29,15.75 11.94,18.68 7.06,18.68 6.71,15.75 5.49,15.04 2.77,16.21 0.33,11.98 2.70,10.21 2.70,8.79 0.33,7.02 2.77,2.79 5.49,3.96" fill="#6e6e6e" stroke="#6e6e6e" stroke-width="1" stroke-linejoin="round"/><circle cx="9.5" cy="9.5" r="3.1350000000000002" fill="#ececec"/></svg>
<div style="position:absolute;left:2160px;top:874px;width:18px;height:3px;background:#6e6e6e;"></div>
<div style="position:absolute;left:114px;top:895px;width:42px;height:318px;background:#ececec;"></div>
<div style="position:absolute;left:156px;top:895px;width:1px;height:318px;background:#c9c9c9;"></div>
<div style="position:absolute;left:157px;top:895px;width:2033px;height:318px;background:#fff;"></div>
<svg style="position:absolute;left:126px;top:908px;overflow:visible" width="19" height="19" viewBox="0 0 19 19"><path d="M15.5 6 A7 7 0 0 0 3 5" fill="none" stroke="#6e6e6e" stroke-width="2.6"/><path d="M0 0.5 L6.5 7 L0 7.5 Z" fill="#6e6e6e"/><path d="M3 13 A7 7 0 0 0 15.5 14" fill="none" stroke="#6e6e6e" stroke-width="2.6"/><path d="M18.5 18.5 L12 12 L18.5 11.5 Z" fill="#6e6e6e"/></svg>
<div style="position:absolute;left:127.5px;top:948.5px;width:15px;height:15px;background:#bdbdbd;"></div>
<div style="position:absolute;left:121px;top:980px;width:29px;height:1px;background:#d2d2d2;"></div>
<svg style="position:absolute;left:125px;top:996px;overflow:visible" width="21" height="20" viewBox="0 0 21 20"><g fill="#6e6e6e"><path d="M0 0 H13 V3 H3 V12 H0 Z"/><rect x="6" y="6" width="15" height="13"/></g><path d="M11 9 L15 12.5 L11 16" fill="none" stroke="#fff" stroke-width="1.6"/></svg>
<div style="position:absolute;left:121px;top:1028.5px;width:29px;height:1px;background:#d2d2d2;"></div>
<svg style="position:absolute;left:124px;top:1043px;overflow:visible" width="22" height="22" viewBox="0 0 22 22"><path d="M12 0 L22 10 L17 11 L13 15 L12 20 L2 10 L7 9 L11 5 Z" fill="#6e6e6e"/><path d="M8 13 L0 22" stroke="#6e6e6e" stroke-width="2.2"/></svg>
<svg style="position:absolute;left:162px;top:905px;overflow:visible" width="14" height="12" viewBox="0 0 14 12"><path d="M0 0 H13 L6.5 11 Z" fill="#a6a6a6"/></svg>
<svg style="position:absolute;left:189.5px;top:903px;overflow:visible" width="20" height="15" viewBox="0 0 20 15"><path d="M1.5 7.5 L7 13 L18.5 1.5" fill="none" stroke="#66c466" stroke-width="3.7"/></svg>
<div style="position:absolute;left:216.25px;top:899.71px;font-family:'Liberation Sans', sans-serif;font-size:20.2px;line-height:1.1172;color:#111;font-weight:bold;font-style:normal;white-space:pre;;letter-spacing:0.564px">test100:</div>
<div style="position:absolute;left:302.20px;top:899.71px;font-family:'Liberation Sans', sans-serif;font-size:20.2px;line-height:1.1172;color:#111;font-weight:normal;font-style:normal;white-space:pre;;letter-spacing:0.367px">sync finished</div>
<div style="position:absolute;left:428.30px;top:899.71px;font-family:'Liberation Sans', sans-serif;font-size:20.2px;line-height:1.1172;color:#7f7f7f;font-weight:normal;font-style:normal;white-space:pre;;letter-spacing:0.356px">at 2020-03-11 01:04</div>
<svg style="position:absolute;left:188.5px;top:935.4000000000001px;overflow:visible" width="14" height="12" viewBox="0 0 14 12"><path d="M0 0 H13 L6.5 11 Z" fill="#a6a6a6"/></svg>
<svg style="position:absolute;left:216.5px;top:932.9000000000001px;overflow:visible" width="20" height="15" viewBox="0 0 20 15"><path d="M1.5 7.5 L7 13 L18.5 1.5" fill="none" stroke="#66c466" stroke-width="3.7"/></svg>
<div style="position:absolute;left:241.50px;top:929.41px;font-family:'Liberation Sans', sans-serif;font-size:20.2px;line-height:1.1172;color:#111;font-weight:normal;font-style:normal;white-space:pre;;letter-spacing:0.100px">Run build</div>
<div style="position:absolute;left:334.50px;top:929.41px;font-family:'Liberation Sans', sans-serif;font-size:20.2px;line-height:1.1172;color:#7f7f7f;font-weight:normal;font-style:normal;white-space:pre;;letter-spacing:0.271px">/Users/mark/workdir/authing/test100</div>
<svg style="position:absolute;left:217px;top:963.1px;overflow:visible" width="12" height="14" viewBox="0 0 12 14"><path d="M0 0 V13 L11 6.5 Z" fill="#a6a6a6"/></svg>
<svg style="position:absolute;left:243px;top:962.6px;overflow:visible" width="20" height="15" viewBox="0 0 20 15"><path d="M1.5 7.5 L7 13 L18.5 1.5" fill="none" stroke="#66c466" stroke-width="3.7"/></svg>
<div style="position:absolute;left:268.40px;top:959.11px;font-family:'Liberation Sans', sans-serif;font-size:20.2px;line-height:1.1172;color:#111;font-weight:normal;font-style:normal;white-space:pre;;letter-spacing:0.244px">Load build</div>
<svg style="position:absolute;left:217px;top:992.8000000000001px;overflow:visible" width="12" height="14" viewBox="0 0 12 14"><path d="M0 0 V13 L11 6.5 Z" fill="#a6a6a6"/></svg>
<svg style="position:absolute;left:243px;top:992.3000000000001px;overflow:visible" width="20" height="15" viewBox="0 0 20 15"><path d="M1.5 7.5 L7 13 L18.5 1.5" fill="none" stroke="#66c466" stroke-width="3.7"/></svg>
<div style="position:absolute;left:268.40px;top:988.81px;font-family:'Liberation Sans', sans-serif;font-size:20.2px;line-height:1.1172;color:#111;font-weight:normal;font-style:normal;white-space:pre;;letter-spacing:0.371px">Configure build</div>
<svg style="position:absolute;left:217px;top:1022.5px;overflow:visible" width="12" height="14" viewBox="0 0 12 14"><path d="M0 0 V13 L11 6.5 Z" fill="#a6a6a6"/></svg>
<svg style="position:absolute;left:243px;top:1022.0px;overflow:visible" width="20" height="15" viewBox="0 0 20 15"><path d="M1.5 7.5 L7 13 L18.5 1.5" fill="none" stroke="#66c466" stroke-width="3.7"/></svg>
<div style="position:absolute;left:268.40px;top:1018.51px;font-family:'Liberation Sans', sans-serif;font-size:20.2px;line-height:1.1172;color:#111;font-weight:normal;font-style:normal;white-space:pre;;letter-spacing:0.180px">allprojects</div>
<div style="position:absolute;right:120px;top:899.71px;font-family:'Liberation Sans', sans-serif;font-size:20.2px;line-height:1.1172;color:#7f7f7f;white-space:pre">820 ms</div>
<div style="position:absolute;right:120px;top:929.41px;font-family:'Liberation Sans', sans-serif;font-size:20.2px;line-height:1.1172;color:#7f7f7f;white-space:pre">551 ms</div>
<div style="position:absolute;right:120px;top:959.11px;font-family:'Liberation Sans', sans-serif;font-size:20.2px;line-height:1.1172;color:#7f7f7f;white-space:pre">32 ms</div>
<div style="position:absolute;right:120px;top:988.81px;font-family:'Liberation Sans', sans-serif;font-size:20.2px;line-height:1.1172;color:#7f7f7f;white-space:pre">224 ms</div>
<div style="position:absolute;right:120px;top:1018.51px;font-family:'Liberation Sans', sans-serif;font-size:20.2px;line-height:1.1172;color:#7f7f7f;white-space:pre">1 ms</div>
<div style="position:absolute;left:83px;top:1213px;width:2138px;height:1px;background:#c9c9c9;"></div>
<div style="position:absolute;left:83px;top:1214px;width:2138px;height:30px;background:#ececec;"></div>
<div style="position:absolute;left:236.5px;top:1214px;width:91px;height:30px;background:#bcbcbc;"></div>
<svg style="position:absolute;left:131px;top:1222px;overflow:visible" width="16" height="15" viewBox="0 0 16 15"><rect width="16" height="15" fill="#6e6e6e"/><path d="M2.5 3 L6 6.5 L2.5 10" fill="none" stroke="#fff" stroke-width="1.3"/><rect x="7" y="10.5" width="6" height="1.4" fill="#fff"/></svg>
<div style="position:absolute;left:155.00px;top:1220.86px;font-family:'Liberation Sans', sans-serif;font-size:16.5px;line-height:1.1172;color:#111;font-weight:normal;font-style:normal;white-space:pre;;letter-spacing:0.429px">Terminal</div>
<svg style="position:absolute;left:251px;top:1221px;overflow:visible" width="20" height="18" viewBox="0 0 20 18"><g transform="scale(0.85) translate(-7.36,-5.63)"><path d="M7.36 13.43 L15.16 5.63 L20.36 5.85 L16.24 10.18 L20.79 14.94 L21.66 15.16 L29.46 22.3 L26 25.77 L18.19 17.98 L13.43 13 L10.4 16.46 Z" fill="#6e6e6e"/></g></svg>
<div style="position:absolute;left:275.70px;top:1220.86px;font-family:'Liberation Sans', sans-serif;font-size:16.5px;line-height:1.1172;color:#111;font-weight:normal;font-style:normal;white-space:pre;;letter-spacing:0.450px">Build</div>
<svg style="position:absolute;left:347.5px;top:1222px;overflow:visible" width="15" height="14" viewBox="0 0 15 14"><g fill="#6e6e6e"><rect x="0" y="1" width="2.5" height="2.5"/><rect x="4.5" y="1" width="10.5" height="2.5"/><rect x="0" y="5.8" width="2.5" height="2.5"/><rect x="4.5" y="5.8" width="10.5" height="2.5"/><rect x="0" y="10.5" width="2.5" height="2.5"/><rect x="4.5" y="10.5" width="10.5" height="2.5"/></g></svg>
<div style="position:absolute;left:369.70px;top:1220.86px;font-family:'Liberation Sans', sans-serif;font-size:16.5px;line-height:1.1172;color:#111;font-weight:normal;font-style:normal;white-space:pre;;letter-spacing:-0.017px"><u>6</u>: TODO</div>
<svg style="position:absolute;left:2074px;top:1220px;overflow:visible" width="19" height="20" viewBox="0 0 19 20"><path d="M18 19 H9.5 A8.5 8.5 0 1 1 18 10.5 Z" fill="none" stroke="#6e6e6e" stroke-width="1.6"/></svg>
<div style="position:absolute;left:2099.00px;top:1219.77px;font-family:'Liberation Sans', sans-serif;font-size:16.6px;line-height:1.1172;color:#111;font-weight:normal;font-style:normal;white-space:pre;;letter-spacing:0.012px">Event Log</div>
<div style="position:absolute;left:83px;top:1244px;width:2138px;height:1px;background:#c9c9c9;"></div>
<div style="position:absolute;left:83px;top:1245px;width:2138px;height:30px;background:#ececec;border-radius:0 0 9px 9px;"></div>
<svg style="position:absolute;left:92px;top:1251px;overflow:visible" width="18" height="18" viewBox="0 0 18 18"><rect x="5" y="0.8" width="12" height="12" fill="none" stroke="#6e6e6e" stroke-width="1.4"/><path d="M0.8 4.5 V17.2 H13.5" fill="none" stroke="#6e6e6e" stroke-width="1.4"/></svg>
<div style="position:absolute;left:1875.60px;top:1251.75px;font-family:'Liberation Sans', sans-serif;font-size:16.4px;line-height:1.1172;color:#111;font-weight:normal;font-style:normal;white-space:pre;;letter-spacing:-0.267px">16:1</div>
<div style="position:absolute;left:1922.40px;top:1251.72px;font-family:'Liberation Sans', sans-serif;font-size:16.0px;line-height:1.1172;color:#111;font-weight:normal;font-style:normal;white-space:pre;;letter-spacing:-1.600px">LF</div>
<svg style="position:absolute;left:1947.5px;top:1255px;overflow:visible" width="8" height="12" viewBox="0 0 8 12"><path d="M0 5 L4 0.5 L8 5 Z M0 7 L4 11.5 L8 7 Z" fill="#6e6e6e"/></svg>
<div style="position:absolute;left:1971.50px;top:1251.17px;font-family:'Liberation Sans', sans-serif;font-size:16.6px;line-height:1.1172;color:#111;font-weight:normal;font-style:normal;white-space:pre;;letter-spacing:0.275px">UTF-8</div>
<svg style="position:absolute;left:2028px;top:1255px;overflow:visible" width="8" height="12" viewBox="0 0 8 12"><path d="M0 5 L4 0.5 L8 5 Z M0 7 L4 11.5 L8 7 Z" fill="#6e6e6e"/></svg>
<div style="position:absolute;left:2052.50px;top:1251.17px;font-family:'Liberation Sans', sans-serif;font-size:16.6px;line-height:1.1172;color:#111;font-weight:normal;font-style:normal;white-space:pre;;letter-spacing:0.129px">4 spaces</div>
<svg style="position:absolute;left:2128.5px;top:1255px;overflow:visible" width="8" height="12" viewBox="0 0 8 12"><path d="M0 5 L4 0.5 L8 5 Z M0 7 L4 11.5 L8 7 Z" fill="#6e6e6e"/></svg>
<svg style="position:absolute;left:2154px;top:1251px;overflow:visible" width="17" height="17" viewBox="0 0 17 17"><path d="M1 8 V4.5 A3.5 3.5 0 0 1 8 4.5" fill="none" stroke="#6e6e6e" stroke-width="1.8"/><rect x="4" y="8" width="12.5" height="9" fill="#6e6e6e"/></svg>
<svg style="position:absolute;left:2191px;top:1250px;overflow:visible" width="19" height="21" viewBox="0 0 19 21"><g fill="none" stroke="#6e6e6e" stroke-width="1.3"><path d="M4 8 V4 A5.5 4 0 0 1 15 4 V8"/><path d="M1 8.5 H18"/><path d="M4 9 V14 A5.5 5 0 0 0 15 14 V9"/><path d="M6.5 15 A3 2 0 0 1 12.5 15"/><path d="M4 19 L2 21 M15 19 L17 21"/></g><circle cx="9.5" cy="5" r="1.3" fill="#6e6e6e"/><circle cx="7" cy="11" r="0.9" fill="#6e6e6e"/><circle cx="12" cy="11" r="0.9" fill="#6e6e6e"/></svg>
</body></html>
